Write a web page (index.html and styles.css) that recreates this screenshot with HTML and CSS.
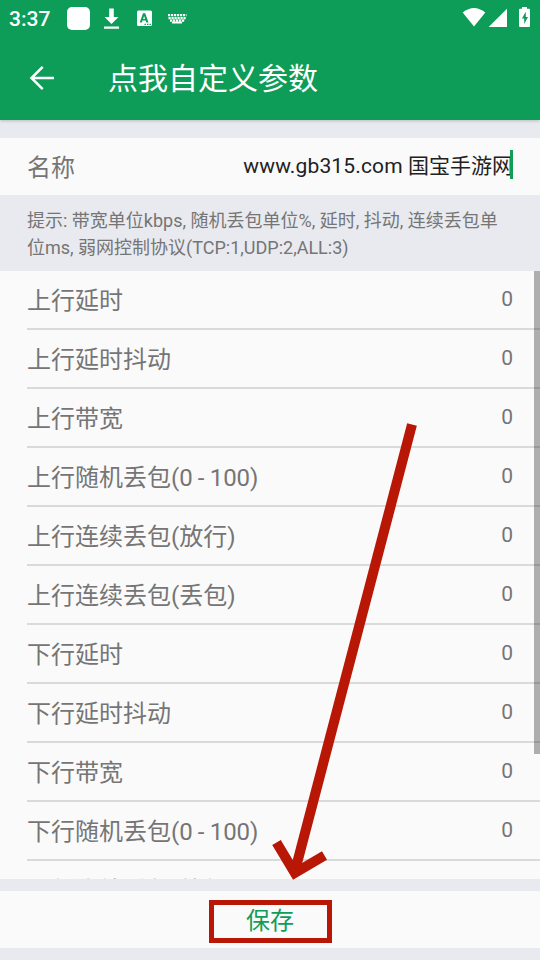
FILE: index.html
```
<!DOCTYPE html>
<html lang="zh-CN">
<head>
<meta charset="utf-8">
<title>点我自定义参数</title>
<link rel="stylesheet" href="styles.css">
</head>
<body>
<div class="screen">
  <header class="header">
    <div class="status">
      <span class="clock">3:37</span>
      <svg class="status-left" width="124" height="36" viewBox="0 0 124 36" fill="#fff">
        <rect x="0" y="7" width="23" height="23" rx="5"/>
        <path d="M42.2 8.500h4.600v8.500h4.700l-7 7-7-7h4.700zM37 26.500h15v2.200H37z"/>
        <path fill-rule="evenodd" d="M71.500 10.500h12a1.500 1.500 0 0 1 1.500 1.500v12.500a1.500 1.500 0 0 1-1.500 1.500h-12a1.500 1.500 0 0 1-1.500-1.500V12a1.500 1.500 0 0 1 1.500-1.500zM76 13.300l-3.300 9.200h2.200l.6-1.900h3.200l.6 1.900h2.200l-3.300-9.200zm1.100 2.600l1 3h-2zM77.500 23.700h1.400v1.400h-1.400zM80 23.700h1.400v1.400H80zM82.500 23.700h1.400v1.400h-1.400z"/>
        <path d="M101 15.100h18.500M101.500 18.100h17.500M103 20.600h14.500" fill="none" stroke="#fff" stroke-width="2.200" stroke-dasharray="2.200 .8"/>
        <path d="M105 21.500h10v2h-10z"/>
      </svg>
      <svg class="status-right" width="80" height="36" viewBox="0 0 80 36" fill="#fff">
        <path d="M2.700 12.500Q14 3.500 25.300 12.500L14 26.500z"/>
        <path d="M47 8.700V27H28.700z"/>
        <path fill-rule="evenodd" d="M62 7h5v1.700h2q1 0 1 1V26q0 1-1 1h-9q-1 0-1-1V9.700q0-1 1-1h2zM65.800 11.800l-3.900 6.700h2.300V24l3.800-7h-2.200z"/>
      </svg>
    </div>
    <div class="toolbar">
      <svg class="back" width="26" height="26" viewBox="0 0 26 26" fill="none" stroke="#fff" stroke-width="2.500"><path d="M25 13H3M13.700 1.800L2.500 13l11.200 11.200"/></svg>
      <h1 class="title">点我自定义参数</h1>
    </div>
  </header>
  <section class="name-row">
    <span class="label">名称</span>
    <span class="name-value"><span class="domain">www.gb315.com</span> 国宝手游网<i class="caret"></i></span>
  </section>
  <p class="hint">提示: 带宽单位kbps, 随机丢包单位%, 延时, 抖动, 连续丢包单<br>位ms, 弱网控制协议(TCP:1,UDP:2,ALL:3)</p>
  <main class="list">
    <div class="row"><span class="label">上行延时</span><span class="value">0</span></div>
    <div class="row"><span class="label">上行延时抖动</span><span class="value">0</span></div>
    <div class="row"><span class="label">上行带宽</span><span class="value">0</span></div>
    <div class="row"><span class="label">上行随机丢包(0 - 100)</span><span class="value">0</span></div>
    <div class="row"><span class="label">上行连续丢包(放行)</span><span class="value">0</span></div>
    <div class="row"><span class="label">上行连续丢包(丢包)</span><span class="value">0</span></div>
    <div class="row"><span class="label">下行延时</span><span class="value">0</span></div>
    <div class="row"><span class="label">下行延时抖动</span><span class="value">0</span></div>
    <div class="row"><span class="label">下行带宽</span><span class="value">0</span></div>
    <div class="row"><span class="label">下行随机丢包(0 - 100)</span><span class="value">0</span></div>
    <div class="row"><span class="label">下行连续丢包(放行)</span></div>
    <i class="scrollbar"></i>
  </main>
  <footer class="footer"><span class="save">保存</span></footer>
  <svg class="arrow" width="540" height="960" viewBox="0 0 540 960" fill="none" stroke="#b91706">
    <path d="M412 424.500L295 871" stroke-width="10"/>
    <path d="M276.500 842.500L294.800 873L324.500 855.500" stroke-width="10"/>
  </svg>
</div>
</body>
</html>
```

FILE: styles.css
```
* { box-sizing: border-box; }
body {
  margin: 0;
  font-family: Roboto, "Noto Sans CJK SC", sans-serif;
  font-weight: 400;
  color: #757575;
}
svg { display: block; flex: none; }
.screen {
  position: relative;
  width: 540px;
  height: 960px;
  overflow: hidden;
  background: #e8eaef;
  display: flex;
  flex-direction: column;
}
.header {
  height: 120px;
  flex: none;
  background: #0d9d58;
  color: #fff;
  box-shadow: 0 1px 3px rgba(0, 0, 0, .2);
}
.status { height: 36px; display: flex; align-items: center; padding-left: 9px; }
.clock { width: 58px; font-size: 21px; font-weight: 500; line-height: 36px; padding-top: 2px; }
.status-right { margin-left: auto; }
.toolbar { height: 84px; display: flex; align-items: center; padding-left: 28.5px; }
.title { margin: 2px 0 0 53.5px; font-size: 30px; font-weight: 400; line-height: 44px; }
.name-row {
  height: 57px;
  flex: none;
  margin-top: 18px;
  padding: 0 27px;
  background: #fafafa;
  display: flex;
  align-items: center;
  justify-content: space-between;
}
.label { font-size: 24px; line-height: 36px; padding-top: 2px; word-spacing: -.8px; white-space: nowrap; }
.name-value { position: relative; margin-bottom: 2px; color: #212121; font-size: 21px; line-height: 30px; white-space: nowrap; }
.domain { letter-spacing: .15px; }
.caret { position: absolute; right: 0; top: -1px; width: 3px; height: 29px; background: #0f9d58; }
.hint {
  margin: 0;
  height: 76px;
  flex: none;
  padding: 12px 27px 0;
  font-size: 18px;
  line-height: 27px;
  white-space: nowrap;
}
.list { position: relative; height: 608px; flex: none; overflow: hidden; background: #fafafa; }
.row {
  height: 59px;
  margin-left: 27px;
  padding-right: 27px;
  border-bottom: 2px solid #dadada;
  display: flex;
  align-items: center;
  justify-content: space-between;
}
.row:last-of-type .label { padding-top: 3px; }
.value { font-size: 21px; line-height: 30px; margin-bottom: 2px; }
.scrollbar { position: absolute; right: 0; top: 0; width: 6px; height: 483px; background: rgba(0, 0, 0, .3); }
.footer {
  height: 57px;
  flex: none;
  margin-top: 12px;
  background: #fafafa;
  display: flex;
  justify-content: center;
  align-items: center;
}
.save {
  width: 123px;
  height: 43px;
  margin-top: 4px;
  border: 5px solid #b91706;
  color: #0f9d58;
  font-size: 24px;
  line-height: 32px;
  text-align: center;
}
.arrow { position: absolute; left: 0; top: 0; pointer-events: none; }
```
